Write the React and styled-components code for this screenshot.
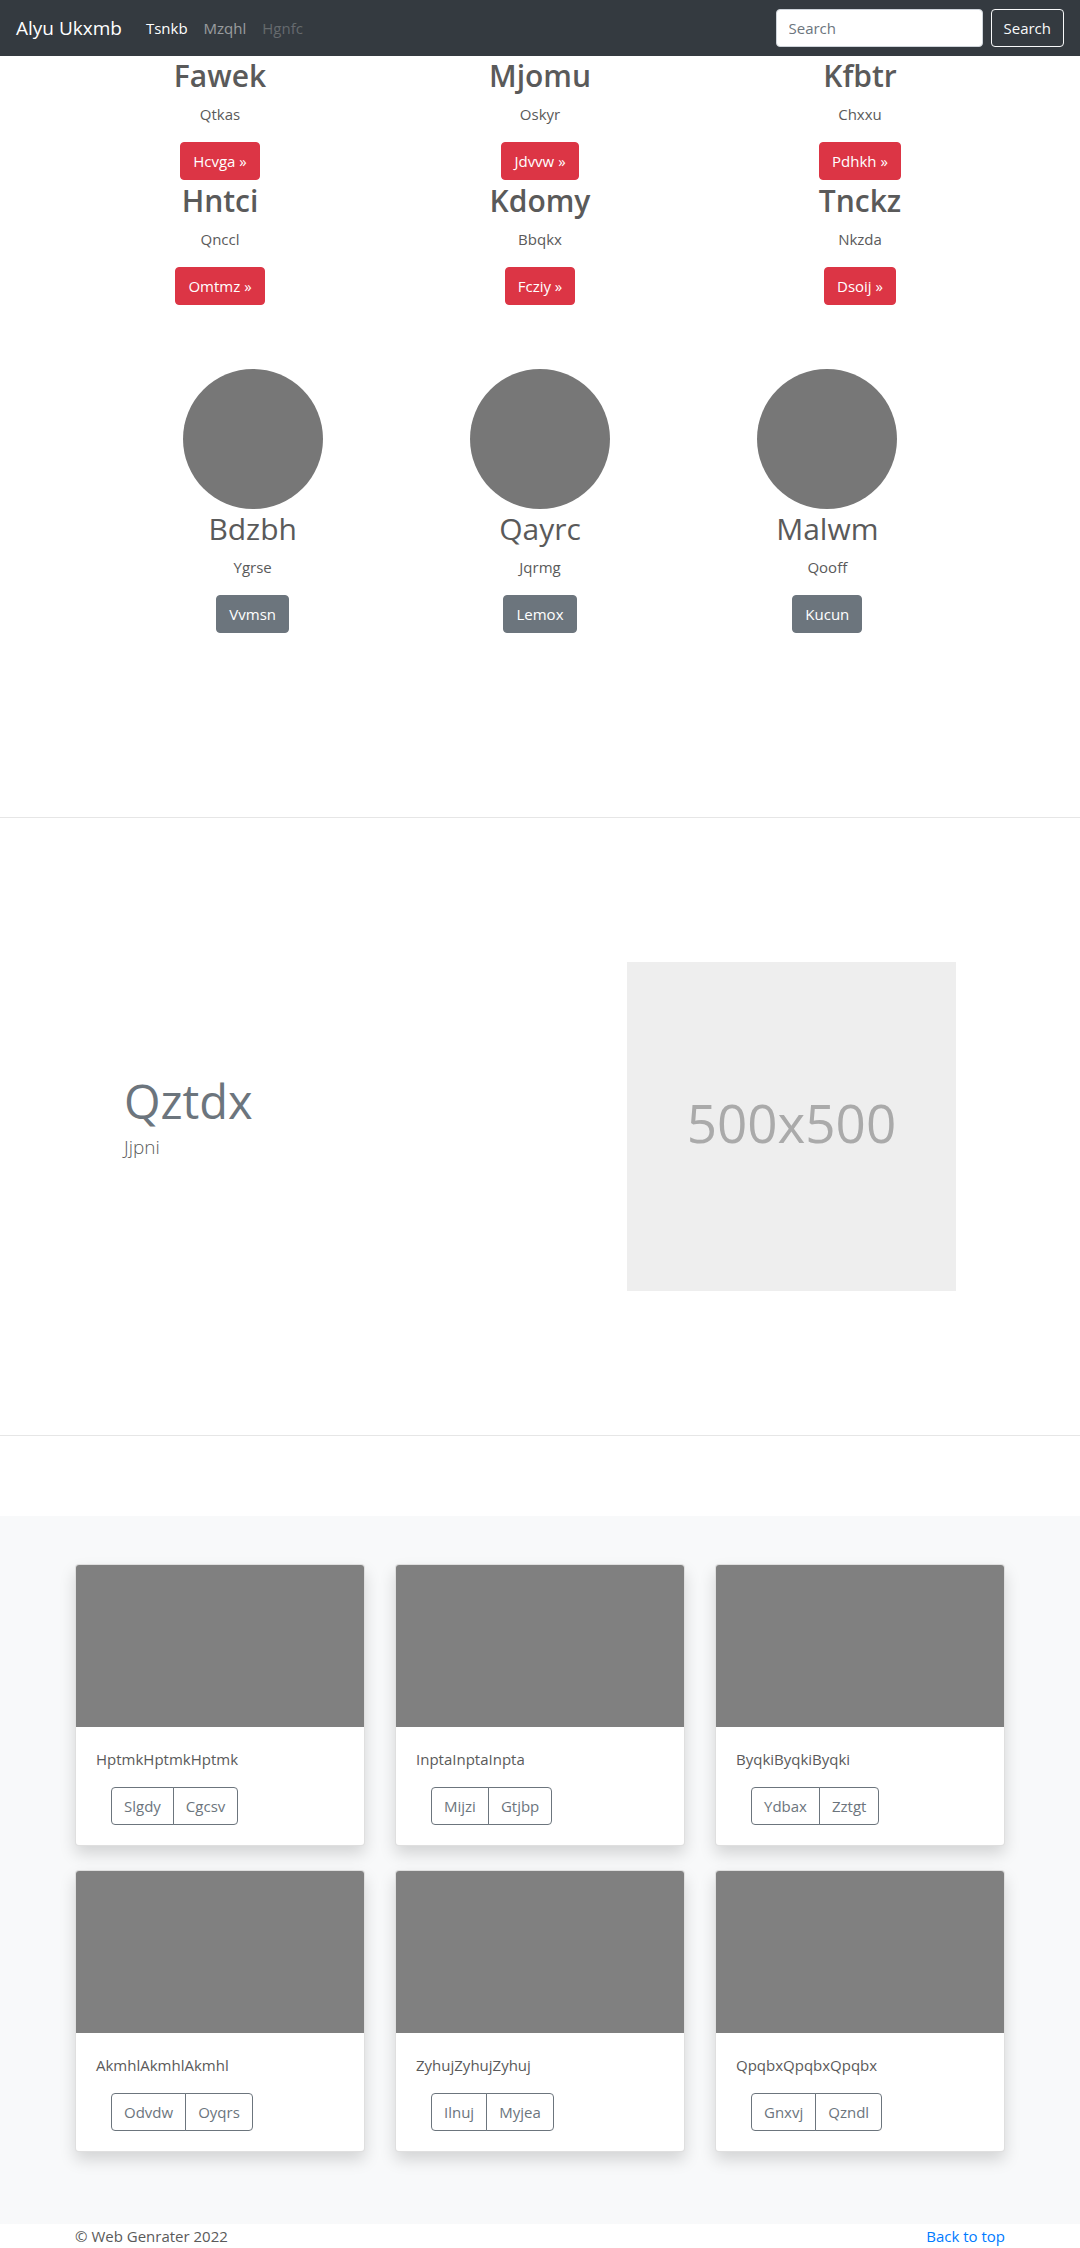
import React from "react";
import styled, { createGlobalStyle } from "styled-components";

const GlobalStyle = createGlobalStyle`
  *, *::before, *::after { box-sizing: border-box; }
  body {
    margin: 0;
    background: #fff;
    color: #5a5a5a;
    font-family: "Segoe UI", "Open Sans", "Noto Sans", sans-serif;
    font-size: 15px;
    line-height: 24px;
  }
  h2, p, ul { margin: 0; padding: 0; }
  a { text-decoration: none; }
`;

const Navbar = styled.header`
  display: flex;
  align-items: center;
  justify-content: space-between;
  min-height: 56px;
  padding: 8px 16px;
  background: #343a40;
`;

const NavStart = styled.nav`
  display: flex;
  align-items: center;
`;

const Brand = styled.a`
  margin-right: 16px;
  color: #fff;
  font-size: 19px;
  line-height: 30px;
`;

const NavList = styled.ul`
  display: flex;
  list-style: none;
`;

const NavLink = styled.a`
  display: block;
  padding: 8px;
  color: ${({ $tone }) =>
    ({
      active: "#fff",
      normal: "rgba(255, 255, 255, 0.5)",
      disabled: "rgba(255, 255, 255, 0.25)",
    })[$tone]};
`;

const SearchForm = styled.form`
  display: flex;
  gap: 8px;
`;

const SearchInput = styled.input`
  width: 207px;
  height: 38px;
  padding: 6px 12px;
  border: 1px solid #ced4da;
  border-radius: 4px;
  background: #fff;
  color: #495057;
  font: inherit;
  &::placeholder {
    color: #6c757d;
    opacity: 1;
  }
`;

const buttonTones = {
  danger: { bg: "#dc3545", border: "#dc3545", text: "#fff" },
  secondary: { bg: "#6c757d", border: "#6c757d", text: "#fff" },
  light: { bg: "transparent", border: "#f8f9fa", text: "#f8f9fa" },
  outline: { bg: "transparent", border: "#6c757d", text: "#6c757d" },
};

const Button = styled.button`
  padding: 6px 12px;
  border: 1px solid ${({ $tone }) => buttonTones[$tone].border};
  border-radius: 4px;
  background: ${({ $tone }) => buttonTones[$tone].bg};
  color: ${({ $tone }) => buttonTones[$tone].text};
  font: inherit;
  cursor: pointer;
`;

const Container = styled.div`
  width: 100%;
  max-width: 960px;
  margin: 0 auto;
  padding: ${({ $space }) =>
    ({ none: "0", gutter: "0 15px", roomy: "64px 49px" })[$space]};
`;

const Columns = styled.div`
  display: grid;
  grid-template-columns: repeat(3, 1fr);
  row-gap: 1px;
`;

const Column = styled.article`
  display: flex;
  flex-direction: column;
  align-items: center;
  text-align: center;
`;

const Title = styled.h2`
  margin-bottom: 6px;
  font-size: 30px;
  font-weight: ${({ $bold }) => ($bold ? 600 : 400)};
  line-height: 40px;
`;

const Text = styled.p`
  margin-bottom: 16px;
`;

const Circle = styled.div`
  width: 140px;
  height: 140px;
  border-radius: 50%;
  background: #777;
`;

const Profiles = styled.section`
  padding-bottom: 40px;
`;

const Divider = styled.hr`
  height: 1px;
  margin: 80px 0;
  border: 0;
  background: #e6e6e6;
`;

const Featurette = styled.section`
  display: grid;
  grid-template-columns: 7fr 5fr;
`;

const FeatureText = styled.div`
  padding: 112px 15px 0;
`;

const FeatureTitle = styled.h2`
  margin-bottom: 4px;
  color: #6c757d;
  font-size: 47px;
  font-weight: 400;
  line-height: 54px;
`;

const Lead = styled.p`
  font-size: 19px;
  font-weight: 300;
  line-height: 30px;
`;

const FeatureMedia = styled.div`
  padding: 0 15px;
`;

const Placeholder = styled.div`
  display: flex;
  align-items: center;
  justify-content: center;
  aspect-ratio: 1;
  padding-bottom: 8px;
  background: #eee;
  color: #aaa;
  font-size: 53px;
  line-height: 72px;
`;

const Album = styled.section`
  padding: 48px 0 72px;
  background: #f8f9fa;
`;

const CardGrid = styled.div`
  display: grid;
  grid-template-columns: repeat(3, 1fr);
  gap: 24px 30px;
`;

const Card = styled.article`
  overflow: hidden;
  border: 1px solid rgba(0, 0, 0, 0.125);
  border-radius: 4px;
  background: #fff;
  box-shadow: 0 8px 16px rgba(0, 0, 0, 0.15);
`;

const CardImage = styled.div`
  height: 162px;
  background: #808080;
`;

const CardBody = styled.div`
  padding: 20px;
`;

const ButtonGroup = styled.div`
  display: flex;
  padding-left: 15px;
  ${Button}:first-child {
    border-radius: 4px 0 0 4px;
  }
  ${Button}:last-child {
    margin-left: -1px;
    border-radius: 0 4px 4px 0;
  }
`;

const Footer = styled.footer`
  display: flex;
  justify-content: space-between;
`;

const FooterLink = styled.a`
  color: #007bff;
`;

const navLinks = [
  ["Tsnkb", "active"],
  ["Mzqhl", "normal"],
  ["Hgnfc", "disabled"],
];

const highlights = [
  ["Fawek", "Qtkas", "Hcvga »"],
  ["Mjomu", "Oskyr", "Jdvvw »"],
  ["Kfbtr", "Chxxu", "Pdhkh »"],
  ["Hntci", "Qnccl", "Omtmz »"],
  ["Kdomy", "Bbqkx", "Fcziy »"],
  ["Tnckz", "Nkzda", "Dsoij »"],
];

const profiles = [
  ["Bdzbh", "Ygrse", "Vvmsn"],
  ["Qayrc", "Jqrmg", "Lemox"],
  ["Malwm", "Qooff", "Kucun"],
];

const cards = [
  ["HptmkHptmkHptmk", "Slgdy", "Cgcsv"],
  ["InptaInptaInpta", "Mijzi", "Gtjbp"],
  ["ByqkiByqkiByqki", "Ydbax", "Zztgt"],
  ["AkmhlAkmhlAkmhl", "Odvdw", "Oyqrs"],
  ["ZyhujZyhujZyhuj", "Ilnuj", "Myjea"],
  ["QpqbxQpqbxQpqbx", "Gnxvj", "Qzndl"],
];

export default function App() {
  return (
    <>
      <GlobalStyle />
      <Navbar id="top">
        <NavStart>
          <Brand href="#top">Alyu Ukxmb</Brand>
          <NavList>
            {navLinks.map(([label, tone]) => (
              <li key={label}>
                <NavLink href="#top" $tone={tone}>{label}</NavLink>
              </li>
            ))}
          </NavList>
        </NavStart>
        <SearchForm onSubmit={(event) => event.preventDefault()}>
          <SearchInput type="text" placeholder="Search" aria-label="Search" />
          <Button type="submit" $tone="light">Search</Button>
        </SearchForm>
      </Navbar>

      <main>
        <Container as="section" $space="none">
          <Columns>
            {highlights.map(([title, text, action]) => (
              <Column key={title}>
                <Title $bold>{title}</Title>
                <Text>{text}</Text>
                <Button type="button" $tone="danger">{action}</Button>
              </Column>
            ))}
          </Columns>
        </Container>

        <Profiles>
          <Container $space="roomy">
            <Columns>
              {profiles.map(([title, text, action]) => (
                <Column key={title}>
                  <Circle />
                  <Title>{title}</Title>
                  <Text>{text}</Text>
                  <Button type="button" $tone="secondary">{action}</Button>
                </Column>
              ))}
            </Columns>
          </Container>
        </Profiles>

        <Divider />

        <Container $space="roomy">
          <Featurette>
            <FeatureText>
              <FeatureTitle>Qztdx</FeatureTitle>
              <Lead>Jjpni</Lead>
            </FeatureText>
            <FeatureMedia>
              <Placeholder>500x500</Placeholder>
            </FeatureMedia>
          </Featurette>
        </Container>

        <Divider />

        <Album>
          <Container $space="gutter">
            <CardGrid>
              {cards.map(([text, first, second]) => (
                <Card key={text}>
                  <CardImage />
                  <CardBody>
                    <Text>{text}</Text>
                    <ButtonGroup>
                      <Button type="button" $tone="outline">{first}</Button>
                      <Button type="button" $tone="outline">{second}</Button>
                    </ButtonGroup>
                  </CardBody>
                </Card>
              ))}
            </CardGrid>
          </Container>
        </Album>
      </main>

      <Container $space="gutter">
        <Footer>
          <span>© Web Genrater 2022</span>
          <FooterLink href="#top">Back to top</FooterLink>
        </Footer>
      </Container>
    </>
  );
}
